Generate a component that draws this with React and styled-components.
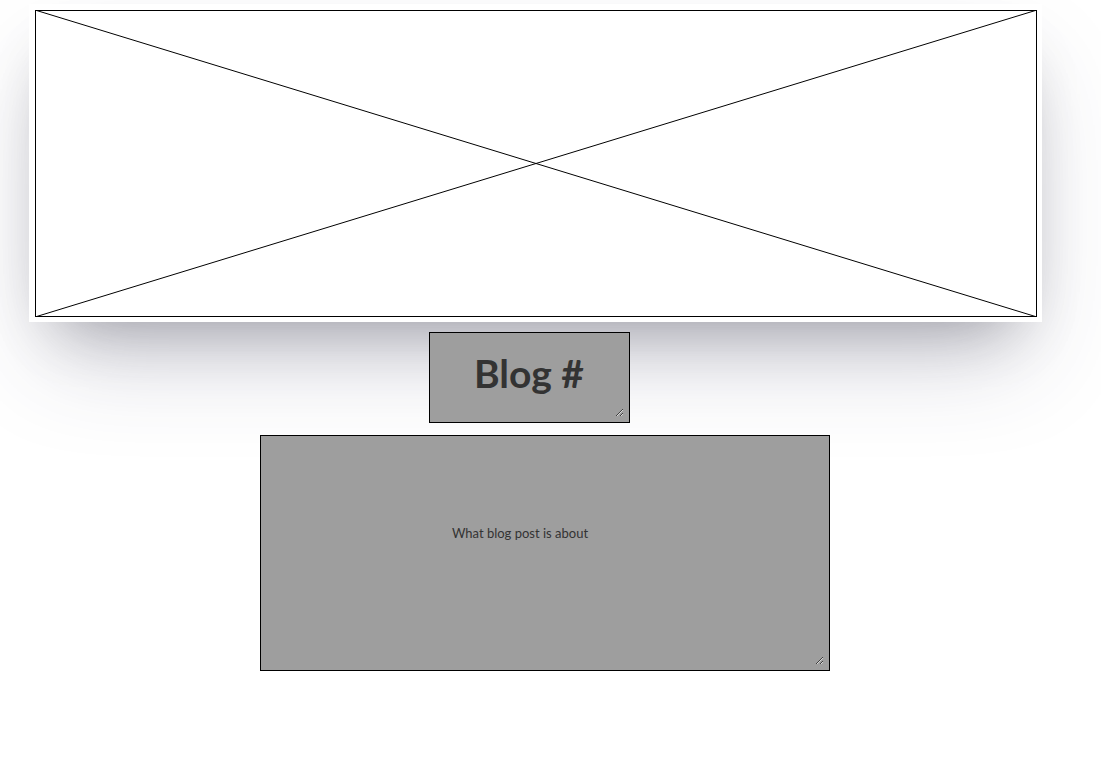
import React from "react";
import styled, { createGlobalStyle } from "styled-components";

const GlobalStyle = createGlobalStyle`
  body {
    margin: 0;
    background: #ffffff;
    font-family: "Lato", "Liberation Sans", sans-serif;
  }
`;

const Page = styled.div`
  display: flex;
  flex-direction: column;
  align-items: flex-start;
  padding-top: 4px;
  min-height: 766px;
`;

const Card = styled.div`
  margin-left: 29px;
  width: 1013px;
  box-sizing: border-box;
  padding: 6px 5px 5px 6px;
  background: #ffffff;
  box-shadow: rgba(50, 50, 93, 0.25) 0px 50px 100px -20px,
    rgba(0, 0, 0, 0.3) 0px 30px 60px -30px;
`;

const Placeholder = styled.svg`
  display: block;
  width: 1002px;
  height: 307px;
`;

// gray box with a thin black frame; the textarea sits inset so its
// resize grip shows a few pixels inside the corner
const Frame = styled.div`
  display: flex;
  box-sizing: border-box;
  margin-left: ${({ $left }) => $left}px;
  margin-top: ${({ $top }) => $top}px;
  width: ${({ $w }) => $w}px;
  height: ${({ $h }) => $h}px;
  padding: 0 5px 5px 0;
  background: #9e9e9e;
  border: 1px solid #000000;
`;

const Field = styled.textarea`
  flex: 1;
  box-sizing: border-box;
  padding: ${({ $pad }) => $pad};
  margin: 0;
  background: transparent;
  border: none;
  color: #333333;
  font-family: "Lato", "Liberation Sans", sans-serif;
  font-size: ${({ $size }) => $size}px;
  font-weight: ${({ $bold }) => ($bold ? 700 : 400)};
  text-align: center;
  outline: none;
  overflow: hidden;
`;

const App = () => {
  return (
    <>
      <GlobalStyle />
      <Page>
        <Card>
          <Placeholder viewBox="0 0 1002 307">
            <rect x="0.5" y="0.5" width="1001" height="306" fill="#fff" stroke="#000" />
            <line x1="0" y1="0" x2="1002" y2="307" stroke="#000" strokeWidth="1" />
            <line x1="0" y1="307" x2="1002" y2="0" stroke="#000" strokeWidth="1" />
          </Placeholder>
        </Card>
        <Frame $left={429} $top={10} $w={201} $h={91}>
          <Field $size={39} $bold $pad="17px 0 0 4px" defaultValue="Blog #" />
        </Frame>
        <Frame $left={260} $top={12} $w={570} $h={236}>
          <Field
            $size={13}
            $pad="89px 55px 0 10px"
            defaultValue="What blog post is about"
          />
        </Frame>
      </Page>
    </>
  );
};

export default App;
